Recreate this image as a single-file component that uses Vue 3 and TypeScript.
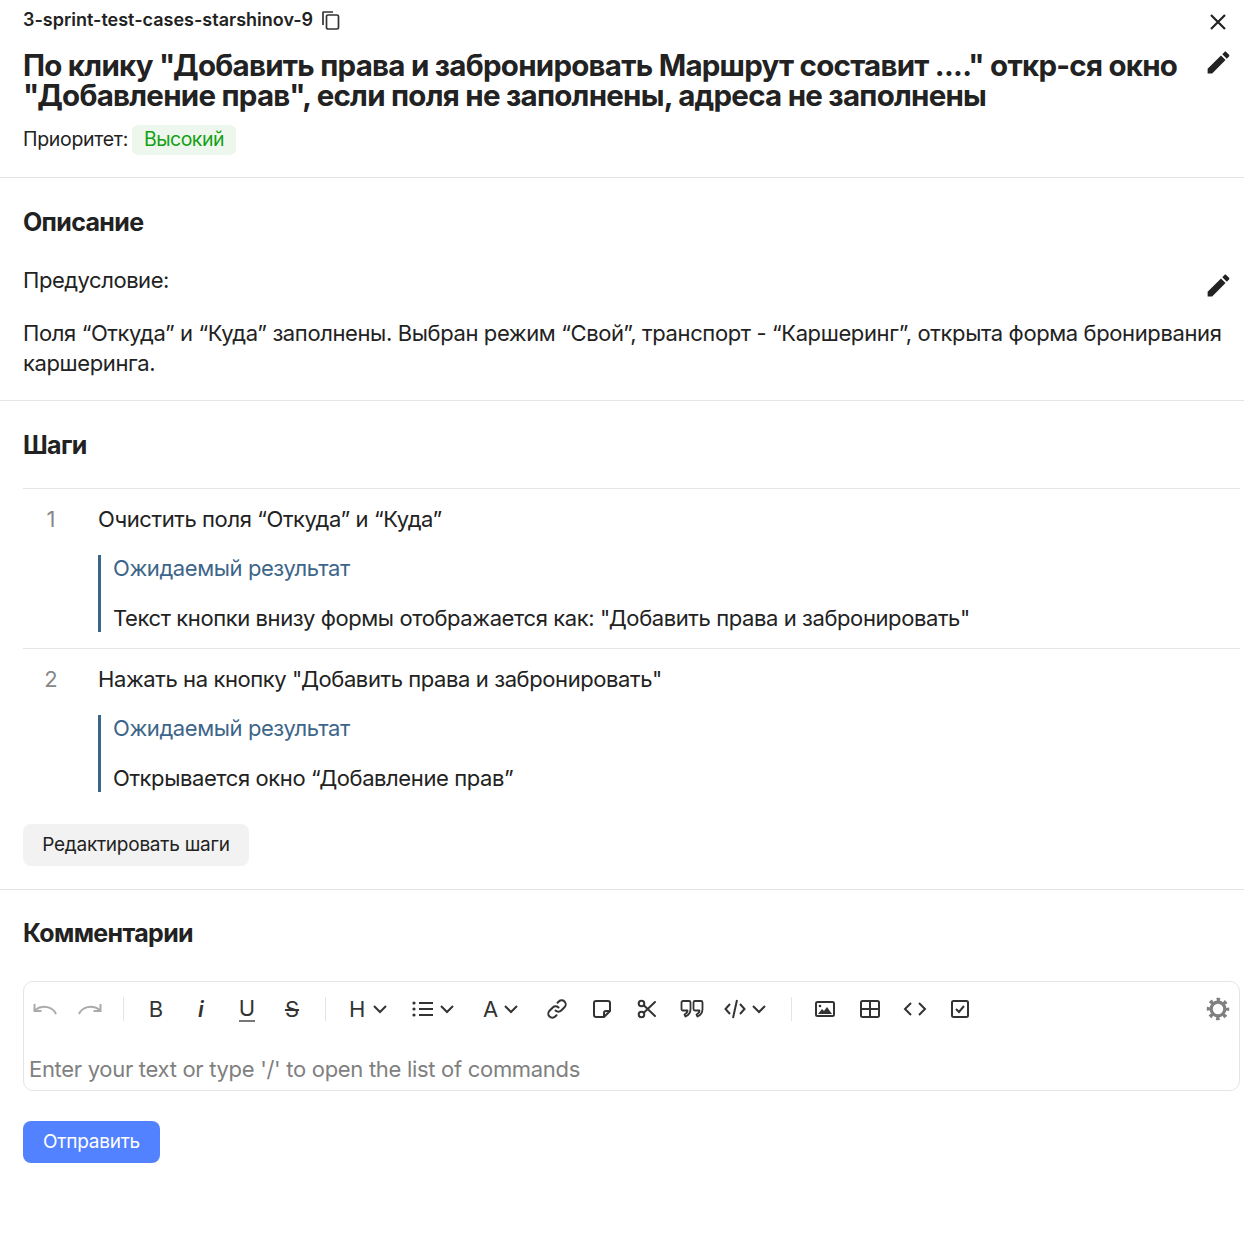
<script setup lang="ts">
const steps = [
  { n: 1, action: 'Очистить поля “Откуда” и “Куда”', result: 'Текст кнопки внизу формы отображается как: "Добавить права и забронировать"' },
  { n: 2, action: 'Нажать на кнопку "Добавить права и забронировать"', result: 'Открывается окно “Добавление прав”' },
]
</script>

<template>
  <div class="page">
    <header class="section head">
      <div class="idrow">
        <div class="idleft">
          <span class="id">3-sprint-test-cases-starshinov-9</span>
          <svg class="copy" width="20" height="20" viewBox="0 0 20 20" fill="none" stroke="#333" stroke-width="1.7">
            <path d="M2 15V2.5c0-.3.2-.5.5-.5H12" />
            <rect x="5.5" y="5" width="12" height="14" rx="1.6" />
          </svg>
        </div>
        <svg class="close" width="18" height="18" viewBox="0 0 18 18" stroke="#222" stroke-width="2.2" fill="none">
          <path d="M2 2l14 14M16 2L2 16" />
        </svg>
      </div>
      <div class="titlerow">
        <h1 class="title">По клику "Добавить права и забронировать Маршрут составит ...." откр-ся окно "Добавление прав", если поля не заполнены, адреса не заполнены</h1>
        <svg class="pencil pencil-title" width="29" height="29" viewBox="0 0 24 24" fill="#222">
          <path d="M3 17.25V21h3.75L17.81 9.94l-3.75-3.75L3 17.25zM20.71 7.04c.39-.39.39-1.02 0-1.41l-2.34-2.34c-.39-.39-1.02-.39-1.41 0l-1.83 1.83 3.75 3.75 1.83-1.83z" />
        </svg>
      </div>
      <div class="prio">
        <span class="prio-label">Приоритет:</span>
        <span class="badge">Высокий</span>
      </div>
    </header>

    <section class="section desc">
      <h2 class="h2">Описание</h2>
      <div class="prerow">
        <span class="pre">Предусловие:</span>
        <svg class="pencil pencil-pre" width="29" height="29" viewBox="0 0 24 24" fill="#222">
          <path d="M3 17.25V21h3.75L17.81 9.94l-3.75-3.75L3 17.25zM20.71 7.04c.39-.39.39-1.02 0-1.41l-2.34-2.34c-.39-.39-1.02-.39-1.41 0l-1.83 1.83 3.75 3.75 1.83-1.83z" />
        </svg>
      </div>
      <p class="para">Поля “Откуда” и “Куда” заполнены. Выбран режим “Свой”, транспорт - “Каршеринг”, открыта форма бронирвания каршеринга.</p>
    </section>

    <section class="section stepsec">
      <h2 class="h2">Шаги</h2>
      <div class="steps">
        <div v-for="s in steps" :key="s.n" class="step">
          <span class="num">{{ s.n }}</span>
          <div class="stepbody">
            <div class="action">{{ s.action }}</div>
            <blockquote class="quote">
              <div class="qhead">Ожидаемый результат</div>
              <div class="qtext">{{ s.result }}</div>
            </blockquote>
          </div>
        </div>
      </div>
      <button class="btn-grey">Редактировать шаги</button>
    </section>

    <section class="section comments">
      <h2 class="h2">Комментарии</h2>
      <div class="editor">
        <div class="toolbar">
          <span class="tb">
            <svg width="26" height="16" viewBox="0 0 26 16" fill="none" stroke="#aaa" stroke-width="2"><path d="M24 13C21 6 11 3 3 9" /><path d="M2.5 3v7h7" /></svg>
          </span>
          <span class="tb">
            <svg width="26" height="16" viewBox="0 0 26 16" fill="none" stroke="#aaa" stroke-width="2"><path d="M2 13C5 6 15 3 23 9" /><path d="M23.5 3v7h-7" /></svg>
          </span>
          <span class="sep"></span>
          <span class="tb ltr">B</span>
          <span class="tb ltr ital">i</span>
          <span class="tb ltr tb-u"><span class="under">U</span></span>
          <span class="tb ltr"><span class="strike">S</span></span>
          <span class="sep sep-b"></span>
          <span class="tb wide ltr w-h">H<svg class="chev" width="16" height="10" viewBox="0 0 16 10" fill="none" stroke="#333" stroke-width="2"><path d="M2 2l6 6 6-6" /></svg></span>
          <span class="tb wide w-l">
            <svg width="22" height="18" viewBox="0 0 22 18" fill="none" stroke="#333" stroke-width="2"><path d="M7 3h14M7 9h14M7 15h14" /><circle cx="2" cy="3" r="1.600" fill="#333" stroke="none" /><circle cx="2" cy="9" r="1.600" fill="#333" stroke="none" /><circle cx="2" cy="15" r="1.600" fill="#333" stroke="none" /></svg>
            <svg class="chev" width="16" height="10" viewBox="0 0 16 10" fill="none" stroke="#333" stroke-width="2"><path d="M2 2l6 6 6-6" /></svg>
          </span>
          <span class="tb wide ltr w-a">A<svg class="chev" width="16" height="10" viewBox="0 0 16 10" fill="none" stroke="#333" stroke-width="2"><path d="M2 2l6 6 6-6" /></svg></span>
          <span class="tb">
            <svg width="22" height="22" viewBox="0 0 22 22" fill="none" stroke="#333" stroke-width="2" stroke-linecap="round"><path d="M9.500 12.500a4 4 0 0 0 5.700 0l3.300-3.300a4 4 0 0 0-5.700-5.700l-1.300 1.300" /><path d="M12.500 9.500a4 4 0 0 0-5.700 0l-3.300 3.300a4 4 0 0 0 5.700 5.700l1.300-1.300" /></svg>
          </span>
          <span class="tb">
            <svg width="20" height="20" viewBox="0 0 20 20" fill="none" stroke="#333" stroke-width="2" stroke-linejoin="round"><path d="M12 18H4a2 2 0 0 1-2-2V4a2 2 0 0 1 2-2h12a2 2 0 0 1 2 2v8z" /><path d="M12 18v-4a2 2 0 0 1 2-2h4" /></svg>
          </span>
          <span class="tb">
            <svg width="20" height="20" viewBox="0 0 20 20" fill="none" stroke="#333" stroke-width="2" stroke-linecap="round"><circle cx="4.500" cy="4.500" r="2.800" /><circle cx="4.500" cy="15.500" r="2.800" /><path d="M7 6.500L18 17M7 13.500L18 3" /></svg>
          </span>
          <span class="tb">
            <svg width="24" height="20" viewBox="0 0 24 20" fill="none" stroke="#333" stroke-width="1.800" stroke-linejoin="round"><path d="M3 2h6a1.500 1.500 0 0 1 1.500 1.500V10c0 3.500-1.500 6-5 7.500l-1-2c2-1 3-2.500 3-4H3a1.500 1.500 0 0 1-1.500-1.500V3.500A1.500 1.500 0 0 1 3 2z" /><path d="M15 2h6a1.500 1.500 0 0 1 1.500 1.500V10c0 3.500-1.500 6-5 7.500l-1-2c2-1 3-2.500 3-4H15a1.500 1.500 0 0 1-1.500-1.500V3.500A1.500 1.500 0 0 1 15 2z" /></svg>
          </span>
          <span class="tb wide w-c">
            <svg width="22" height="20" viewBox="0 0 22 20" fill="none" stroke="#333" stroke-width="2"><path d="M6 5L1.500 10 6 15M16 5l4.500 5-4.500 5M13 1L9 19" /></svg>
            <svg class="chev" width="16" height="10" viewBox="0 0 16 10" fill="none" stroke="#333" stroke-width="2"><path d="M2 2l6 6 6-6" /></svg>
          </span>
          <span class="sep sep-last"></span>
          <span class="tb">
            <svg width="20" height="16" viewBox="0 0 20 16" fill="none" stroke="#333" stroke-width="2"><rect x="1" y="1" width="18" height="14" rx="1.500" /><path d="M3 13l4-5 2 2 3-4 5 7z" fill="#333" stroke="none" /><circle cx="5" cy="5" r="1.300" fill="#333" stroke="none" /></svg>
          </span>
          <span class="tb">
            <svg width="20" height="18" viewBox="0 0 20 18" fill="none" stroke="#333" stroke-width="2"><rect x="1" y="1" width="18" height="16" rx="1.500" /><path d="M1 9h18M10 1v16" /></svg>
          </span>
          <span class="tb">
            <svg width="24" height="16" viewBox="0 0 24 16" fill="none" stroke="#333" stroke-width="2"><path d="M8 2L2 8l6 6M16 2l6 6-6 6" /></svg>
          </span>
          <span class="tb">
            <svg width="18" height="18" viewBox="0 0 18 18" fill="none" stroke="#333" stroke-width="2"><rect x="1" y="1" width="16" height="16" rx="1.500" /><path d="M5 9l3 3 5-6" /></svg>
          </span>
          <span class="gear">
            <svg width="24" height="24" viewBox="0 0 24 24" fill="none" stroke="#808080">
              <circle cx="12" cy="12" r="6.800" stroke-width="3.200" />
              <circle cx="12" cy="12" r="9.500" stroke-width="3.500" stroke-dasharray="3.500 3.960" stroke-dashoffset="1.700" />
            </svg>
          </span>
        </div>
        <div class="placeholder">Enter your text or type '/' to open the list of commands</div>
      </div>
      <button class="btn-send">Отправить</button>
    </section>
  </div>
</template>

<style scoped>
.page {
  width: 1244px;
  min-height: 1256px;
  background: #fff;
  color: #222;
  font-family: Inter, "Noto Sans", sans-serif;
  font-size: 22px;
  line-height: 30px;
  box-sizing: border-box;
}
.section {
  padding-left: 23px;
  border-bottom: 1px solid #e5e5e5;
}
.head { padding-bottom: 22px; }
.idrow {
  height: 40px;
  display: flex;
  align-items: center;
  justify-content: space-between;
  padding-right: 17px;
}
.idleft { display: flex; align-items: center; }
.id { font-size: 18px; font-weight: 600; letter-spacing: 0; }
.copy { margin-left: 8px; }
.close { margin-top: 4px; }
.titlerow {
  margin-top: 10px;
  display: flex;
  justify-content: space-between;
  padding-right: 11px;
}
.title {
  margin: 0;
  width: 1165px;
  font-size: 29.500px;
  line-height: 29px;
  padding-bottom: 2px;
  font-weight: 700;
  letter-spacing: -0.75px;
}
.title { line-height: 30px; padding-bottom: 0; }
.pencil { flex: none; }
.pencil-title { margin-top: -2px; }
.prio { display: flex; align-items: center; margin-top: 15px; height: 30px; }
.prio-label { font-size: 19.500px; line-height: 28px; height: 30px; letter-spacing: -0.3px; }
.badge {
  margin-left: 4px;
  height: 30px;
  width: 104px;
  border-radius: 6px;
  background: #edf7ee;
  color: #14a014;
  font-size: 19.500px;
  line-height: 28px;
  text-align: center;
  letter-spacing: -0.5px;
}
.h2 {
  margin: 0;
  font-size: 25px;
  line-height: 30px;
  font-weight: 700;
  letter-spacing: -0.66px;
}
.desc { padding-top: 29px; padding-bottom: 22px; padding-right: 11px; }
.prerow {
  margin-top: 28px;
  height: 30px;
  display: flex;
  justify-content: space-between;
}
.pencil-pre { margin-top: 6px; }
.para { margin: 23px 0 0; letter-spacing: -0.39px; }
.pre { letter-spacing: -0.46px; }
.stepsec { padding-top: 29px; padding-bottom: 23px; }
.steps { margin-top: 28px; padding-right: 4px; }
.step {
  border-top: 1px solid #e5e5e5;
  display: grid;
  grid-template-columns: 56px 1fr;
  column-gap: 19px;
  padding-top: 15px;
  padding-bottom: 16px;
}
.step:last-child { padding-bottom: 0; }
.num { color: #888; text-align: center; }
.action { letter-spacing: -0.41px; }
.quote {
  margin: 21px 0 0;
  height: 77px;
  box-sizing: border-box;
  border-left: 3px solid #3d6589;
  padding-left: 12px;
  line-height: 26px;
  letter-spacing: -0.41px;
}
.qhead { color: #3d6589; height: 50px; }
.btn-grey {
  margin-top: 32px;
  display: block;
  width: 226px;
  height: 42px;
  border: 0;
  border-radius: 8px;
  background: #f2f2f2;
  color: #222;
  font: inherit;
  font-size: 19px;
  line-height: 40px;
  letter-spacing: -0.25px;
  padding: 0;
}
.comments { padding-top: 28px; border-bottom: 0; padding-right: 4px; }
.editor {
  margin-top: 33px;
  height: 110px;
  box-sizing: border-box;
  border: 1px solid #e5e5e5;
  border-radius: 10px;
}
.toolbar {
  height: 54px;
  display: flex;
  align-items: center;
  gap: 3px;
}
.tb {
  width: 42px;
  height: 30px;
  display: flex;
  align-items: center;
  justify-content: center;
  flex: none;
}
.tb-u { margin-left: 1px; }
.wide { justify-content: flex-start; gap: 5px; box-sizing: border-box; }
.w-h { width: 63px; padding-left: 12px; gap: 7px; }
.w-l { width: 65px; padding-left: 9px; }
.w-a { width: 62px; padding-left: 12px; }
.w-c { width: 60px; padding-left: 8px; }
.ltr { font-size: 22px; font-weight: 400; color: #333; }
.ital { font-style: italic; font-weight: 600; }
.under {
  border-bottom: 2px solid #777;
  line-height: 24px;
  display: inline-block;
}
.strike { text-decoration: line-through; text-decoration-thickness: 1.500px; }
.sep {
  width: 1px;
  height: 24px;
  background: #e5e5e5;
  margin: 0 8px 0 9px;
  flex: none;
}
.sep-b { margin-left: 9px; margin-right: 8px; }
.sep-last { margin: 0 9px 0 12px; }
.gear { margin-left: auto; margin-right: 9px; display: flex; }
.placeholder {
  margin-top: 18px;
  padding-left: 5px;
  line-height: 30px;
  color: #808080;
  letter-spacing: -0.3px;
}
.btn-send {
  margin-top: 30px;
  display: block;
  width: 137px;
  height: 42px;
  border: 0;
  border-radius: 8px;
  background: #5282ff;
  color: #fff;
  font: inherit;
  font-size: 19px;
  line-height: 40px;
  letter-spacing: -0.25px;
  padding: 0;
}
</style>

<style>
html, body { background: #fff; }
</style>
